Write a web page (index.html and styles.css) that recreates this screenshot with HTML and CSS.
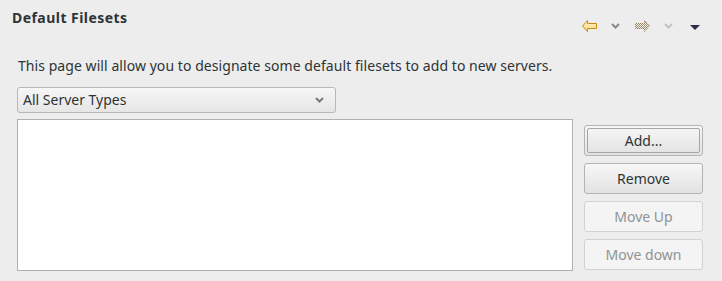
FILE: index.html
```html
<!DOCTYPE html>
<html>
<head>
<meta charset="utf-8">
<link rel="stylesheet" href="styles.css">
</head>
<body>
<div class="page">
  <div class="header">
    <div class="title">Default Filesets</div>
    <div class="toolbar">
      <svg class="ico arrow" width="15" height="12" viewBox="0 0 15 12">
        <defs>
          <linearGradient id="yl" x1="0" y1="0" x2="0" y2="1">
            <stop offset="0" stop-color="#fff6d0"/>
            <stop offset="1" stop-color="#f6d67a"/>
          </linearGradient>
        </defs>
        <path d="M0.5 6 L5.5 0.5 L5.5 3.5 L14.5 3.5 L14.5 8.5 L5.5 8.5 L5.5 11.5 Z" fill="url(#yl)" stroke="#c98a12" stroke-width="1" stroke-linejoin="round"/>
      </svg>
      <svg class="ico chev" width="9" height="6" viewBox="0 0 9 6">
        <path d="M1 1 L4.5 4.5 L8 1" fill="none" stroke="#8a8a8a" stroke-width="2"/>
      </svg>
      <svg class="ico arrow" width="15" height="12" viewBox="0 0 15 12">
        <defs>
          <pattern id="chk" width="2" height="2" patternUnits="userSpaceOnUse">
            <rect width="2" height="2" fill="#f2efe6"/>
            <rect width="1" height="1" fill="#9c8d6c"/>
            <rect x="1" y="1" width="1" height="1" fill="#9c8d6c"/>
          </pattern>
        </defs>
        <path d="M14.5 6 L9.5 0.5 L9.5 3.5 L0.5 3.5 L0.5 8.5 L9.5 8.5 L9.5 11.5 Z" fill="url(#chk)" stroke="#8c7a55" stroke-width="1" stroke-dasharray="1 1" stroke-linejoin="round"/>
      </svg>
      <svg class="ico chev" width="9" height="6" viewBox="0 0 9 6">
        <path d="M1 1 L4.5 4.5 L8 1" fill="none" stroke="#c4c4c4" stroke-width="2"/>
      </svg>
      <svg class="ico tri" width="10" height="5" viewBox="0 0 10 5">
        <path d="M0 0 L10 0 L5 5 Z" fill="#2f2c4a"/>
      </svg>
    </div>
  </div>
  <div class="content">
    <p class="desc">This page will allow you to designate some default filesets to add to new servers.</p>
    <div class="combo">
      <span>All Server Types</span>
      <svg width="9" height="6" viewBox="0 0 9 6">
        <path d="M1 1 L4.5 4.5 L8 1" fill="none" stroke="#7a7a7a" stroke-width="2"/>
      </svg>
    </div>
    <div class="main">
      <div class="list"></div>
      <div class="buttons">
        <button class="btn default"><span>Add...</span></button>
        <button class="btn">Remove</button>
        <button class="btn disabled">Move Up</button>
        <button class="btn disabled">Move down</button>
      </div>
    </div>
  </div>
</div>
</body>
</html>
```
FILE: styles.css
```css
html, body {
  margin: 0;
  padding: 0;
  background: #ededed;
}
body {
  font-family: "Noto Sans", "DejaVu Sans", sans-serif;
  font-size: 14px;
  color: #2e3436;
  width: 722px;
  height: 281px;
  overflow: hidden;
}
.header {
  display: flex;
  justify-content: space-between;
  align-items: flex-start;
  height: 56px;
}
.title {
  font-weight: bold;
  font-size: 14px;
  letter-spacing: 0.45px;
  line-height: 16px;
  padding: 10px 0 0 12px;
  color: #2e3436;
}
.toolbar {
  display: flex;
  align-items: center;
  margin-top: 20px;
  margin-right: 22px;
  height: 12px;
}
.ico { display: block; }
.toolbar .arrow:first-child { margin-right: 14px; }
.toolbar .chev { margin-right: 15px; }
.toolbar .arrow:nth-child(3) { margin-right: 14px; }
.toolbar .chev:nth-child(4) { margin-right: 17px; }
.tri { margin-top: 2px; }
.content {
  padding: 0 19px 0 17px;
}
.desc {
  margin: 0 0 0 1px;
  line-height: 20px;
  height: 31px;
  letter-spacing: 0.06px;
}
.combo {
  box-sizing: border-box;
  width: 319px;
  height: 26px;
  border: 1px solid #b8b8b8;
  border-radius: 3px;
  background: linear-gradient(#f6f6f6, #e6e6e6);
  display: flex;
  align-items: center;
  justify-content: space-between;
  padding: 0 11px 0 5px;
  margin-bottom: 6px;
}
.combo span { line-height: 18px; }
.main {
  display: flex;
  align-items: flex-start;
}
.list {
  box-sizing: border-box;
  width: 556px;
  height: 152px;
  background: #fff;
  border: 1px solid #b0b0b0;
}
.buttons {
  display: flex;
  flex-direction: column;
  gap: 7px;
  margin-left: 11px;
  margin-top: 6px;
}
.btn {
  box-sizing: border-box;
  width: 119px;
  height: 31px;
  border: 1px solid #b4b4b4;
  border-radius: 3px;
  background: linear-gradient(#f7f7f7, #e2e2e2);
  font-family: inherit;
  font-size: 14px;
  color: #2e3436;
  padding: 0;
  display: flex;
  align-items: center;
  justify-content: center;
}
.btn.default {
  padding: 2px;
}
.btn.default span {
  box-sizing: border-box;
  width: 100%;
  height: 100%;
  border: 1px solid #a6a6a6;
  border-radius: 2px;
  display: flex;
  align-items: center;
  justify-content: center;
}
.btn.disabled {
  background: #f4f4f4;
  border-color: #d2d2d2;
  color: #8f9393;
}
```
